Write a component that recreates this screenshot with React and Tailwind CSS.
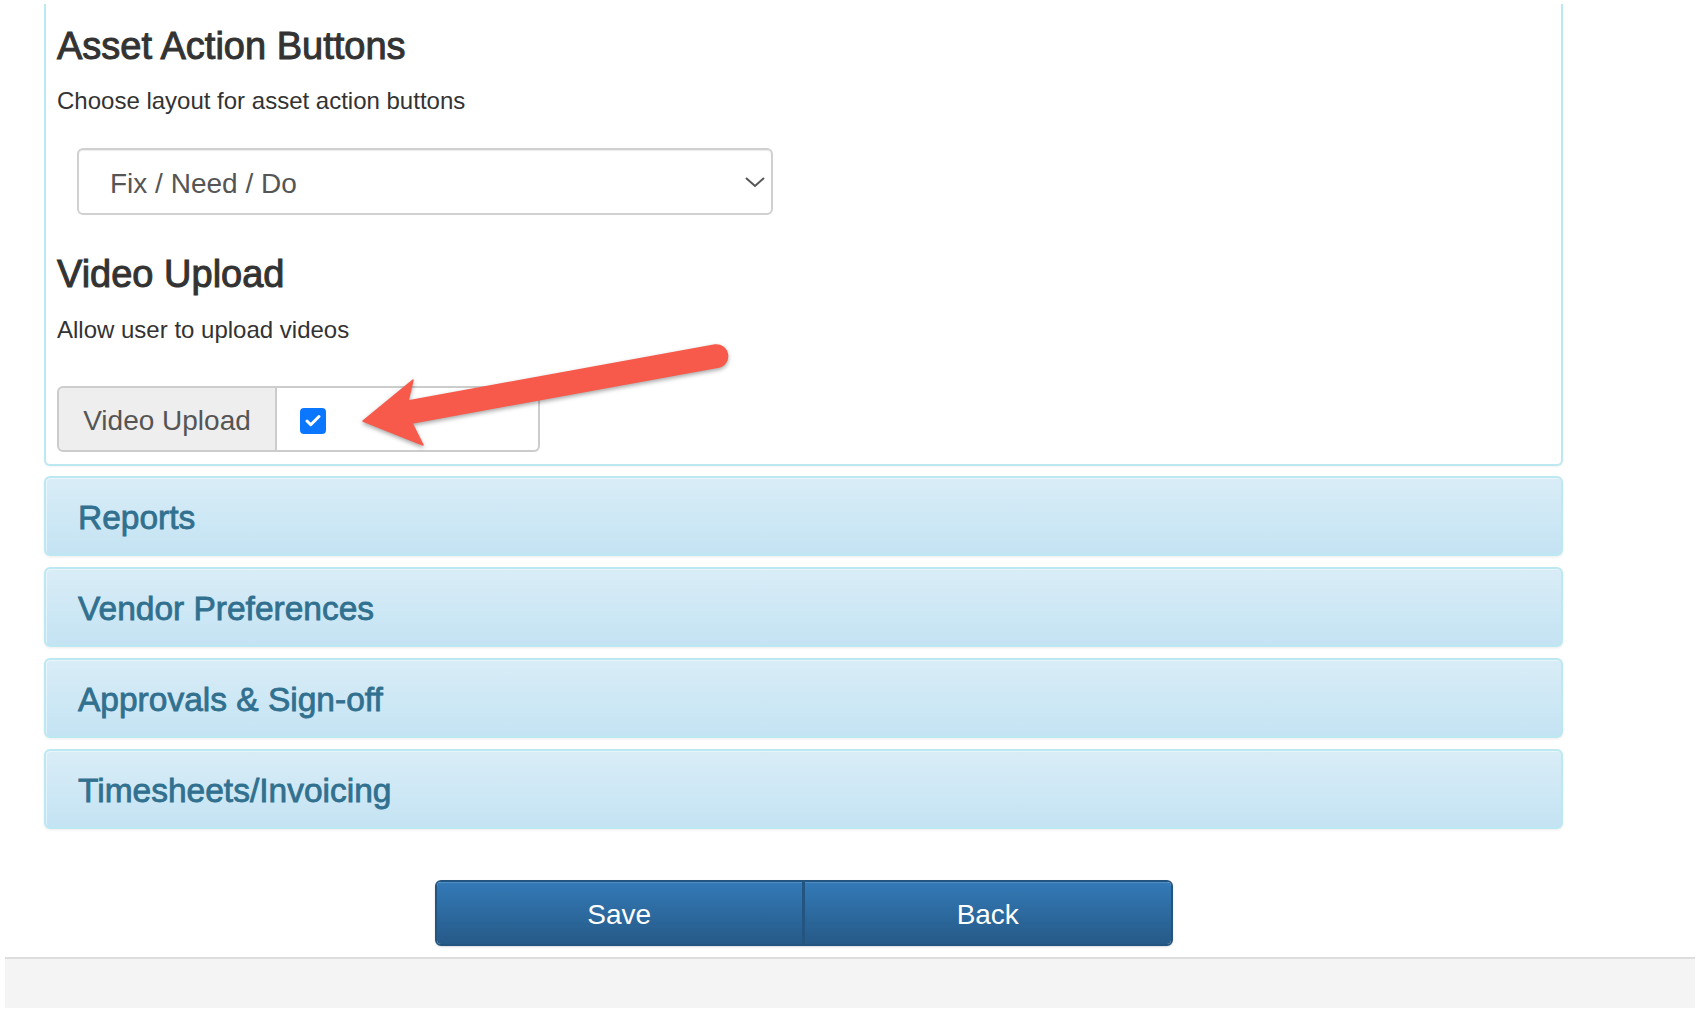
import { Check } from 'lucide-react'

// Collapsed accordion sections under the open one.
const SECTIONS = ['Reports', 'Vendor Preferences', 'Approvals & Sign-off', 'Timesheets/Invoicing']

// ---------- Skitch-style annotation arrow ----------
function AnnotationArrow() {
  return (
    <svg
      width="1700"
      height="1014"
      viewBox="0 0 1700 1014"
      className="absolute left-0 top-0 pointer-events-none drop-shadow-[0_2px_2px_rgba(0,0,0,0.35)]"
    >
      <path
        d="M363 421 L413 380 L408 401 L715 345 A11.2 11.2 0 0 1 719 367 L412 423 L423 445 Z"
        fill="#f75a4b"
        stroke="#f75a4b"
        strokeWidth="1.5"
        strokeLinejoin="round"
      />
    </svg>
  )
}

// ---------- Fake select ----------
function LayoutSelect() {
  return (
    <div className="ml-[20px] mt-[30px] w-[696px] h-[67px] flex items-center justify-between pl-[31px] pr-[6px] border-2 border-[#d0d0d0] rounded-[6px] bg-white shadow-[inset_0_1px_1px_rgba(0,0,0,0.075)]">
      <span className="pt-[4px] text-[28px] text-[#555]">Fix / Need / Do</span>
      <svg width="20" height="12" viewBox="0 0 20 12">
        <polyline points="1,2 10,10 19,2" fill="none" stroke="#555" strokeWidth="2" />
      </svg>
    </div>
  )
}

// ---------- Input group with checkbox ----------
function VideoToggle() {
  return (
    <div className="mt-[39px] flex w-[483px] h-[66px]">
      <div className="w-[220px] flex items-center justify-center pt-[4px] bg-[#eee] border-2 border-[#ccc] rounded-l-[6px] text-[28px] text-[#555]">
        Video Upload
      </div>
      <div className="flex-1 flex items-center pl-[23px] pt-[3px] border-2 border-l-0 border-[#ccc] rounded-r-[6px] bg-white">
        <span className="grid place-items-center w-[26px] h-[26px] rounded-[4px] bg-[#0b76ff]">
          <Check size={18} strokeWidth={4} color="#fff" />
        </span>
      </div>
    </div>
  )
}

export default function App() {
  return (
    <div className="relative w-[1700px] h-[1014px] overflow-hidden bg-white pt-[4px] font-['Liberation_Sans',Arial,sans-serif]">
      <div className="ml-[44px] w-[1519px]">
        {/* Open panel — top edge is scrolled out of view */}
        <div className="border-x-2 border-b-2 border-[#bce8f1] rounded-b-[6px] bg-white pl-[11px] pt-[21px] pb-[12px] shadow-[0_1px_2px_rgba(0,0,0,0.05)]">
          <h3 className="text-[38px] leading-[42px] text-[#333] [-webkit-text-stroke:1px_#333]">
            Asset Action Buttons
          </h3>
          <p className="mt-[17px] text-[24px] leading-[34px] text-[#333]">
            Choose layout for asset action buttons
          </p>
          <LayoutSelect />

          <h3 className="mt-[38px] text-[38px] leading-[42px] text-[#333] [-webkit-text-stroke:1px_#333]">
            Video Upload
          </h3>
          <p className="mt-[18px] text-[24px] leading-[34px] text-[#333]">
            Allow user to upload videos
          </p>
          <VideoToggle />
        </div>

        {/* Collapsed panels */}
        <div className="mt-[10px] flex flex-col gap-[11px]">
          {SECTIONS.map((title) => (
            <div
              key={title}
              className="h-[80px] flex items-center pl-[32px] pt-[4px] border-2 border-[#bce8f1] rounded-[6px] bg-gradient-to-b from-[#d9edf7] to-[#c4e3f3] shadow-[0_1px_3px_rgba(0,0,0,0.08),inset_1px_1px_0_rgba(255,255,255,0.45)]"
            >
              <span className="text-[33.5px] text-[#31708f] [-webkit-text-stroke:0.8px_#31708f]">{title}</span>
            </div>
          ))}
        </div>

        {/* Save / Back */}
        <div className="mt-[51px] flex justify-center">
          <div className="flex w-[738px] h-[66px] rounded-[6px] border-2 border-[#245580] overflow-hidden shadow-[0_1px_2px_rgba(0,0,0,0.15)]">
            <button className="flex-1 pt-[4px] bg-gradient-to-b from-[#337ab7] to-[#265a88] text-white text-[28px] shadow-[inset_0_1px_0_rgba(255,255,255,0.15)]">
              Save
            </button>
            <div className="w-[3px] bg-[#245580]" />
            <button className="flex-1 pt-[4px] bg-gradient-to-b from-[#337ab7] to-[#265a88] text-white text-[28px] shadow-[inset_0_1px_0_rgba(255,255,255,0.15)]">
              Back
            </button>
          </div>
        </div>
      </div>

      {/* Footer strip */}
      <div className="mt-[11px] mx-[5px] h-[51px] border-t-2 border-[#ddd] bg-[#f4f4f4]" />

      <AnnotationArrow />
    </div>
  )
}
